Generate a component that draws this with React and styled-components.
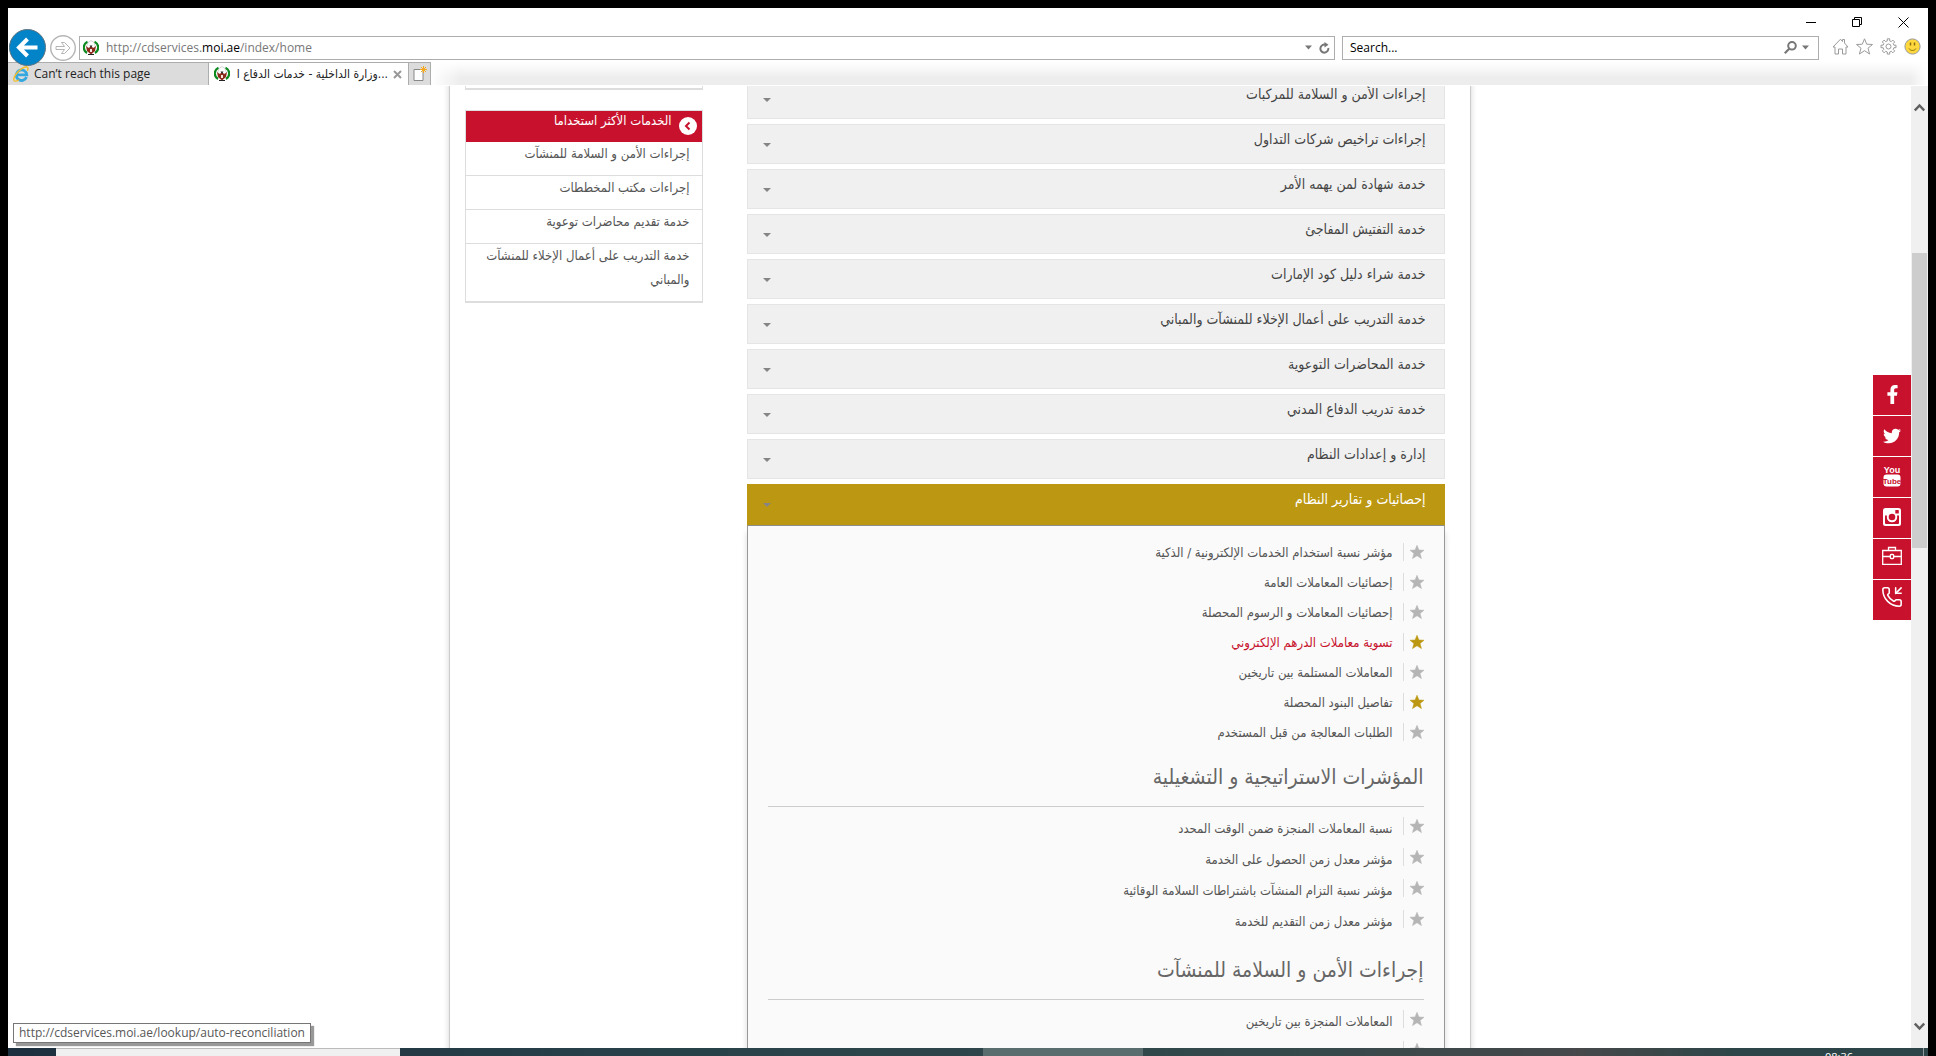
import React from "react";
import styled, { createGlobalStyle, css } from "styled-components";
import { FaFacebookF, FaTwitter } from "react-icons/fa";
import { PhoneIncoming } from "lucide-react";

const RED = "#c8122d";
const GOLD = "#bc9711";
const ARABIC = '"DejaVu Sans Condensed", "DejaVu Sans", sans-serif';
const UI = '"Open Sans", "Noto Sans", sans-serif';

const GlobalStyle = createGlobalStyle`
  *, *::before, *::after { box-sizing: border-box; }
  body { margin: 0; background: #000; }
  ul { list-style: none; margin: 0; padding: 0; }
  button { border: 0; padding: 0; background: none; font: inherit; color: inherit; cursor: pointer; }
  a { color: inherit; text-decoration: none; }
  svg { display: block; flex: none; }
`;

/* ---------- desktop and window ---------- */

const Desktop = styled.div`
  display: flex;
  flex-direction: column;
  height: 100vh;
  padding: 8px 8px 0;
  overflow: hidden;
  font-family: ${UI};
`;

const BrowserWindow = styled.div`
  flex: 1;
  min-height: 0;
  display: flex;
  flex-direction: column;
  background: #fff;
  position: relative;
`;

const TitleBar = styled.div`
  display: flex;
  justify-content: flex-end;
  gap: 35px;
  height: 21px;
  padding: 9px 19px 0 0;
`;

const WindowButton = styled.button`
  width: 11px;
  height: 11px;
`;

const AddressRow = styled.div`
  display: flex;
  align-items: center;
  height: 33px;
  padding: 4px 7px 0 1px;
`;

const NavButton = styled.button`
  width: ${(p) => p.$size}px;
  height: ${(p) => p.$size}px;
  margin-right: ${(p) => p.$gap}px;
  position: relative;
  z-index: 1;
`;

const field = css`
  display: flex;
  align-items: center;
  height: 24px;
  border: 1px solid #adadad;
  background: #fff;
  font-size: 12px;
`;

const UrlField = styled.div`
  ${field}
  flex: 1;
  gap: 7px;
  padding: 0 4px 0 3px;
  color: #777;
  margin-right: 7px;
`;

const UrlText = styled.div`
  flex: 1;
  font-size: 12px;
  line-height: 20px;
  b { font-weight: 400; color: #000; }
`;

const SearchField = styled.form`
  ${field}
  width: 477px;
  gap: 5px;
  padding: 0 9px 0 7px;
  margin-right: 13px;
`;

const SearchInput = styled.input`
  flex: 1;
  min-width: 0;
  border: 0;
  outline: 0;
  padding: 0;
  background: none;
  font: 12px/20px ${UI};
  &::placeholder { color: #000; opacity: 1; }
`;

const ToolIcons = styled.div`
  display: flex;
  gap: 7px;
  padding-bottom: 2px;
`;

const TabBar = styled.div`
  display: flex;
  height: 24px;
  background:
    linear-gradient(to right, #fff, rgba(255, 255, 255, 0) 30px) 423px 0 / 100% 100% no-repeat,
    linear-gradient(to left, #fff, rgba(255, 255, 255, 0) 18px),
    linear-gradient(#fff, #ededed 16px);
  border-bottom: 1px solid #fff;
`;

const Tab = styled.div`
  display: flex;
  align-items: center;
  gap: 5px;
  width: ${(p) => (p.$active ? "201px" : "200px")};
  padding: 0 6px 0 5px;
  border: 1px solid #adadad;
  border-left-width: ${(p) => (p.$active ? "1px" : "0")};
  border-right-width: ${(p) => (p.$active ? "1px" : "0")};
  border-bottom: 0;
  background: ${(p) => (p.$active ? "#fff" : "#dcdcdc")};
`;

const TabTitle = styled.button`
  flex: 1;
  display: flex;
  align-items: center;
  gap: 5px;
  text-align: left;
  white-space: nowrap;
  font-size: 12px;
  line-height: 20px;
  color: #222;
  bdi { font-family: ${ARABIC}; flex: 1; text-align: right; }
`;

const NewTab = styled.button`
  display: grid;
  place-items: center;
  width: 22px;
  border: 1px solid #adadad;
  border-left: 0;
  border-bottom: 0;
  background: #dcdcdc;
`;

/* ---------- page viewport ---------- */

const Viewport = styled.div`
  flex: 1;
  min-height: 0;
  display: flex;
  overflow: hidden;
`;

const PageArea = styled.div`
  flex: 1;
  overflow: hidden;
  position: relative;
`;

const Sheet = styled.div`
  direction: rtl;
  display: flex;
  align-items: flex-start;
  justify-content: space-between;
  gap: 44px;
  max-width: 1022px;
  min-height: 100%;
  margin: -7px auto 0;
  padding: 0 25px 0 15px;
  border: solid #ccc;
  border-width: 0 1px;
  box-shadow: 0 0 6px rgba(0, 0, 0, 0.18);
  font-family: ${ARABIC};
`;

const Main = styled.main`
  flex: 1;
`;

const Row = styled.button`
  display: flex;
  align-items: flex-start;
  justify-content: space-between;
  width: 100%;
  height: 40px;
  margin-bottom: 5px;
  padding: 2px 18px 0 15px;
  border: 1px solid #e5e5e5;
  background: #f0f0f0;
  font-size: 14px;
  line-height: 24px;
  color: #444;
  ${(p) =>
    p.$open &&
    css`
      height: 42px;
      margin: 6px 0 0;
      border-color: ${GOLD} ${GOLD} #8e8e8e;
      background: ${GOLD};
      color: #fff;
      margin-top: 1px;
    `}
`;

const Caret = styled.span`
  margin-top: 16px;
  border: solid transparent;
  border-width: 4px 4px 0;
  border-top-color: #858585;
`;

const Panel = styled.div`
  padding: 17px 20px 0;
  border: solid #999;
  border-width: 0 1px;
  background: #fafafa;
  box-shadow: 0 6px 6px rgba(0, 0, 0, 0.15);
`;

const LinkList = styled.ul`
  padding-bottom: ${(p) => (p.$loose ? 5 : 0)}px;
  li { height: ${(p) => (p.$loose ? 31 : 30)}px; }
  a { line-height: ${(p) => (p.$loose ? 24 : 20)}px; }
`;

const Item = styled.li`
  display: flex;
  align-items: flex-start;
  gap: 6px;
`;

const StarButton = styled.button`
  padding-top: 2px;
  color: ${(p) => (p.$on ? GOLD : "#b5b5b5")};
`;

const ItemLink = styled.a`
  height: 18px;
  padding-right: 10px;
  border-right: 1px solid #ddd;
  font-size: 13px;
  color: ${(p) => (p.$hot ? RED : "#555")};
`;

const SectionTitle = styled.h2`
  margin: 9px 0 10px;
  padding-bottom: 14px;
  border-bottom: 1px solid #ccc;
  font-weight: 400;
  font-size: 21px;
  line-height: 30px;
  color: #666;
`;

/* ---------- side column ---------- */

const Side = styled.aside`
  width: 238px;
  display: flex;
  flex-direction: column;
  gap: 20px;
`;

const SideBox = styled.section`
  min-height: 11px;
  border: 1px solid #ddd;
  border-bottom-width: 2px;
`;

const SideTitle = styled.h3`
  display: flex;
  align-items: flex-start;
  gap: 7px;
  height: 31px;
  margin: 0;
  padding: 0 5px 0 0;
  background: ${RED};
  color: #fff;
  font-weight: 400;
  font-size: 13px;
  line-height: 20px;
  svg { margin-top: 6px; }
`;

const SideLink = styled.a`
  display: block;
  padding: 0 12px 9px;
  font-size: 13px;
  line-height: 24px;
  color: #555;
  li + li > & { border-top: 1px solid #ddd; }
`;

/* ---------- floating and edge parts ---------- */

const Social = styled.nav`
  position: absolute;
  top: 289px;
  right: 0;
  display: flex;
  flex-direction: column;
  gap: 1px;
`;

const SocialLink = styled.a`
  display: grid;
  place-items: center;
  width: 38px;
  height: 40px;
  padding-bottom: ${(p) => p.$lift}px;
  background: ${RED};
  color: #fff;
`;

const Scrollbar = styled.div`
  display: flex;
  flex-direction: column;
  align-items: center;
  width: 17px;
  padding: 17px 0;
  background: #f0f0f0;
`;

const Track = styled.div`
  flex: 1;
  width: 15px;
  padding-top: 141px;
`;

const Thumb = styled.div`
  height: 295px;
  background: #cdcdcd;
`;

const StatusTip = styled.output`
  position: absolute;
  left: 5px;
  bottom: 5px;
  height: 20px;
  padding: 0 5px;
  border: 1px solid #767676;
  background: #fff;
  box-shadow: 3px 3px 1px rgba(0, 0, 0, 0.4);
  font-size: 12px;
  line-height: 18px;
  color: #575757;
`;

const Taskbar = styled.footer`
  display: grid;
  grid-template-columns: 48px 344px 583px 160px 1fr auto 70px 5px;
  height: 8px;
  overflow: hidden;
  background: linear-gradient(to right, #1d303f, #28424a 35%, #33494b 65%, #46484a 82%, #2d4548 90%);
`;

const TaskSearch = styled.div`
  grid-column: 2;
  background: #f0f0f0;
  border-top: 1px solid #bbb;
`;

const TaskApp = styled.div`
  grid-column: 4;
  background: #596c6e;
`;

const Clock = styled.time`
  grid-column: 6;
  padding-top: 2px;
  font-size: 11px;
  line-height: 14px;
  color: #fff;
`;

const ShowDesktop = styled.div`
  grid-column: 8;
  border-left: 1px solid #8b9798;
`;

/* ---------- drawings ---------- */

const Emblem = () => (
  <svg width="16" height="16" viewBox="0 0 16 16" aria-hidden="true">
    <path d="M4.500 1.800A6.300 6.300 0 0 0 4 13M11.500 1.800A6.300 6.300 0 0 1 12 13" fill="none" stroke="#0c8a1f" strokeWidth="2.200" />
    <path d="M5 2.500 8 .5l3 2 1.500 4.500L8 9 3.500 7z" fill="#fff" stroke="#aaa" strokeWidth=".5" />
    <path d="M3 6l2.500 2L8 6.500 10.500 8 13 6l-1 5-4 3.500L4 11z" fill="#8c2a1c" />
    <path d="M6.500 5.500h3L8 8z" fill="#222" />
    <path d="M7 9h2v3H7z" fill="#f3e5e0" />
    <path d="M5 14.500h6" stroke="#222" />
  </svg>
);

const IeLogo = () => (
  <svg width="16" height="16" viewBox="0 0 16 16" aria-hidden="true">
    <path d="M13.500 11A5.300 5.300 0 1 1 13.800 8.800H4" fill="none" stroke="#35a8e0" strokeWidth="2.800" />
    <path d="M1.300 14.800C-1 11.500 7 2 12.500.9c3-.5 2.800 2 1.800 4" fill="none" stroke="#f3bd2b" strokeWidth="1.500" />
    <path d="M1.300 14.800c1 .8 3 0 4.500-1" fill="none" stroke="#f3bd2b" strokeWidth="1.400" />
  </svg>
);

const BackIcon = () => (
  <svg width="37" height="37" viewBox="0 0 37 37" aria-hidden="true">
    <circle cx="18.500" cy="18.500" r="18" fill="#0484c8" stroke="#5f7480" />
    <path d="M28.500 18.500H11M18.500 10l-8.500 8.500 8.500 8.500" fill="none" stroke="#fff" strokeWidth="4" />
  </svg>
);

const ForwardIcon = () => (
  <svg width="26" height="26" viewBox="0 0 26 26" fill="none" stroke="#b5b5b5" aria-hidden="true">
    <circle cx="13" cy="13" r="12.300" strokeWidth="1.400" />
    <path d="M6 11.500h8.500L11.500 7.500h3L20 13l-5.500 5.500h-3l3-4H6z" />
  </svg>
);

const Down = () => (
  <svg width="7" height="5" viewBox="0 0 7 5" aria-hidden="true"><path d="M0 .5h7L3.500 4.500z" fill="#777" /></svg>
);

const Refresh = () => (
  <svg width="11" height="12" viewBox="0 0 11 12" aria-hidden="true">
    <path d="M6.500 2.800A4 4 0 1 0 9.300 6" fill="none" stroke="#777" strokeWidth="2" />
    <path d="M5.500 0v5.500l4-2.700z" fill="#777" />
  </svg>
);

const Magnifier = () => (
  <svg width="13" height="13" viewBox="0 0 13 13" fill="none" stroke="#777" aria-hidden="true">
    <circle cx="8" cy="4.800" r="3.800" strokeWidth="2" /><path d="M5.200 7.800.8 12.200" strokeWidth="2.200" />
  </svg>
);

const Home = () => (
  <svg width="17" height="17" viewBox="0 0 17 17" fill="none" stroke="#9a9a9a" aria-hidden="true">
    <path d="M3 9v7h3.500v-5h4v5H14V9h2L12.500 5V1.500h-2V3.500L8.500 1.200 1 9z" />
  </svg>
);

const starPath = "M8.500.8l2.200 5.400 5.800.3-4.500 3.700 1.600 5.800-5.100-3.300L3.400 16 5 10.200.5 6.500l5.800-.3z";

const OutlineStar = () => (
  <svg width="17" height="17" viewBox="0 0 17 17" fill="none" stroke="#9a9a9a" aria-hidden="true"><path d={starPath} /></svg>
);

const Star = () => (
  <svg width="14" height="14" viewBox="0.5 0.5 16 16" fill="currentColor" stroke="currentColor" strokeWidth=".6" overflow="visible" aria-hidden="true">
    <path d={starPath} />
  </svg>
);

const Gear = () => (
  <svg width="17" height="17" viewBox="0 0 17 17" fill="none" stroke="#9a9a9a" aria-hidden="true">
    <path d="M7.300.8h2.400v2.100l1.600.7 1.500-1.500 1.900 1.900-1.500 1.500.7 1.700H16v2.500h-2.100l-.7 1.700 1.500 1.500-1.900 1.900-1.500-1.500-1.600.7v2.100H7.300V14l-1.700-.7-1.500 1.500-1.800-1.900 1.500-1.500-.7-1.700H1V7.200h2.100l.7-1.700L2.300 4l1.800-1.900 1.500 1.500 1.700-.7z" />
    <circle cx="8.500" cy="8.500" r="2.500" />
  </svg>
);

const Smile = () => (
  <svg width="17" height="17" viewBox="0 0 17 17" aria-hidden="true">
    <circle cx="8.500" cy="8.500" r="7.600" fill="#ffd83d" stroke="#999" />
    <path d="M6.500 4.500v3M10.500 4.500v3" stroke="#8a6d10" strokeWidth="1.500" />
    <path d="M5 10.500c1.500 2.600 5.500 2.600 7 0" fill="none" stroke="#8a6d10" />
  </svg>
);

const NewTabIcon = () => (
  <svg width="14" height="16" viewBox="0 0 14 16" aria-hidden="true">
    <path d="M1 3.500h9v11H1z" fill="#fff" stroke="#888" />
    <path d="M10.500 0v7M7 3.500h7M8 1l5 5M13 1 8 6" stroke="#f5a81c" />
  </svg>
);

const CircleChevron = () => (
  <svg width="18" height="18" viewBox="0 0 18 18" aria-hidden="true">
    <circle cx="9" cy="9" r="9" fill="#fff" />
    <path d="M10.500 5.500 7 9l3.500 3.500" fill="none" stroke={RED} strokeWidth="2" />
  </svg>
);

const YouTube = () => (
  <svg width="18" height="22" viewBox="0 0 18 22" aria-hidden="true">
    <rect x=".5" y="9.500" width="17" height="12" rx="3" fill="#fff" />
    <g fontFamily="Liberation Sans Narrow, Liberation Sans, sans-serif" fontWeight="700" textAnchor="middle">
      <text x="9" y="8" fontSize="9" fill="#fff">You</text>
      <text x="9" y="19" fontSize="8" fill={RED}>Tube</text>
    </g>
  </svg>
);

const Instagram = () => (
  <svg width="18" height="18" viewBox="0 0 18 18" aria-hidden="true">
    <rect width="18" height="18" rx="2.500" fill="#fff" />
    <path d="M2 7.500h2.200a5 5 0 1 0 9.600 0H16V15a1 1 0 0 1-1 1H3a1 1 0 0 1-1-1z" fill={RED} />
    <circle cx="9" cy="9" r="5.200" fill="#fff" /><circle cx="9" cy="9" r="3.300" fill={RED} />
    <rect x="12.300" y="2" width="3.500" height="3.500" rx=".6" fill={RED} />
  </svg>
);

const Briefcase = () => (
  <svg width="20" height="20" viewBox="0 0 20 20" fill="none" stroke="#fff" strokeWidth="1.300" aria-hidden="true">
    <path d="M.7 4.500h18.600v13.800H.7zM6.500 4.300V1.500h7v2.800M.7 10.500H8M12 10.500h7.300" />
    <rect x="8.300" y="8.500" width="3.400" height="4" rx="1" />
  </svg>
);

const Chevron = ({ up }) => (
  <svg width="11" height="9" viewBox="0 0 11 9" fill="none" stroke="#606060" strokeWidth="2.500" aria-hidden="true">
    <path d={up ? "M.8 7.500 5.500 2.500l4.700 5" : "M.8 1.500l4.700 5 4.700-5"} />
  </svg>
);

/* ---------- data ---------- */

const services = [
  "إجراءات الأمن و السلامة للمركبات",
  "إجراءات تراخيص شركات التداول",
  "خدمة شهادة لمن يهمه الأمر",
  "خدمة التفتيش المفاجئ",
  "خدمة شراء دليل كود الإمارات",
  "خدمة التدريب على أعمال الإخلاء للمنشآت والمباني",
  "خدمة المحاضرات التوعوية",
  "خدمة تدريب الدفاع المدني",
  "إدارة و إعدادات النظام",
];

const reports = [
  { text: "مؤشر نسبة استخدام الخدمات الإلكترونية / الذكية" },
  { text: "إحصائيات المعاملات العامة" },
  { text: "إحصائيات المعاملات و الرسوم المحصلة" },
  { text: "تسوية معاملات الدرهم الإلكتروني", on: true, hot: true },
  { text: "المعاملات المستلمة بين تاريخين" },
  { text: "تفاصيل البنود المحصلة", on: true },
  { text: "الطلبات المعالجة من قبل المستخدم" },
];

const indicators = [
  { text: "نسبة المعاملات المنجزة ضمن الوقت المحدد" },
  { text: "مؤشر معدل زمن الحصول على الخدمة" },
  { text: "مؤشر نسبة التزام المنشآت باشتراطات السلامة الوقائية" },
  { text: "مؤشر معدل زمن التقديم للخدمة" },
];

const safety = [{ text: "المعاملات المنجزة بين تاريخين" }, { text: "" }];

const popular = [
  "إجراءات الأمن و السلامة للمنشآت",
  "إجراءات مكتب المخططات",
  "خدمة تقديم محاضرات توعوية",
  "خدمة التدريب على أعمال الإخلاء للمنشآت والمباني",
];

const social = [
  { name: "Facebook", icon: <FaFacebookF size={19} />, lift: 2 },
  { name: "Twitter", icon: <FaTwitter size={18} />, lift: 0 },
  { name: "YouTube", icon: <YouTube />, lift: 2 },
  { name: "Instagram", icon: <Instagram />, lift: 2 },
  { name: "Careers", icon: <Briefcase />, lift: 6 },
  { name: "Contact", icon: <PhoneIncoming size={22} strokeWidth={1.7} />, lift: 6 },
];

const Links = ({ items, loose }) => (
  <LinkList $loose={loose}>
    {items.map((item, i) => (
      <Item key={i}>
        <StarButton $on={item.on} aria-label="المفضلة"><Star /></StarButton>
        <ItemLink href="#" $hot={item.hot}>{item.text}</ItemLink>
      </Item>
    ))}
  </LinkList>
);

export default function App() {
  return (
    <Desktop>
      <GlobalStyle />
      <BrowserWindow>
        <TitleBar>
          <WindowButton aria-label="Minimize">
            <svg width="11" height="11" stroke="#000"><path d="M0 5.500h10" /></svg>
          </WindowButton>
          <WindowButton aria-label="Restore">
            <svg width="11" height="11" stroke="#000" fill="none"><path d="M.5 2.500h7v7h-7zM2.500 2.500v-2h7v7h-2" /></svg>
          </WindowButton>
          <WindowButton aria-label="Close">
            <svg width="11" height="11" stroke="#000"><path d="M.5.500l10 10M10.500.500l-10 10" /></svg>
          </WindowButton>
        </TitleBar>
        <AddressRow>
          <NavButton $size={37} $gap={4} aria-label="Back"><BackIcon /></NavButton>
          <NavButton $size={26} $gap={3} aria-label="Forward"><ForwardIcon /></NavButton>
          <UrlField>
            <Emblem />
            <UrlText role="textbox" aria-label="Address">http://cdservices.<b>moi.ae</b>/index/home</UrlText>
            <Down />
            <button aria-label="Refresh"><Refresh /></button>
          </UrlField>
          <SearchField role="search">
            <SearchInput aria-label="Search" placeholder="Search..." />
            <button type="button" aria-label="Go"><Magnifier /></button>
            <Down />
          </SearchField>
          <ToolIcons>
            <button aria-label="Home"><Home /></button>
            <button aria-label="Favorites"><OutlineStar /></button>
            <button aria-label="Tools"><Gear /></button>
            <button aria-label="Feedback"><Smile /></button>
          </ToolIcons>
        </AddressRow>
        <TabBar>
          <Tab><TabTitle><IeLogo /><span>Can’t reach this page</span></TabTitle></Tab>
          <Tab $active>
            <TabTitle><Emblem /><bdi dir="rtl">...وزارة الداخلية - خدمات الدفاع ا</bdi></TabTitle>
            <button aria-label="Close tab">
              <svg width="9" height="9" stroke="#999" strokeWidth="2"><path d="M1 1l7 7M8 1 1 8" /></svg>
            </button>
          </Tab>
          <NewTab aria-label="New tab"><NewTabIcon /></NewTab>
        </TabBar>

        <Viewport>
          <PageArea>
            <Sheet lang="ar">
              <Main>
                {services.map((name) => (
                  <Row key={name}><span>{name}</span><Caret /></Row>
                ))}
                <Row $open aria-expanded="true"><span>إحصائيات و تقارير النظام</span><Caret /></Row>
                <Panel>
                  <Links items={reports} />
                  <SectionTitle>المؤشرات الاستراتيجية و التشغيلية</SectionTitle>
                  <Links items={indicators} loose />
                  <SectionTitle>إجراءات الأمن و السلامة للمنشآت</SectionTitle>
                  <Links items={safety} loose />
                </Panel>
              </Main>
              <Side>
                <SideBox />
                <SideBox>
                  <SideTitle><CircleChevron />الخدمات الأكثر استخداما</SideTitle>
                  <ul>
                    {popular.map((name) => (
                      <li key={name}><SideLink href="#">{name}</SideLink></li>
                    ))}
                  </ul>
                </SideBox>
              </Side>
            </Sheet>
            <Social>
              {social.map(({ name, icon, lift }) => (
                <SocialLink key={name} href="#" $lift={lift} aria-label={name}>{icon}</SocialLink>
              ))}
            </Social>
          </PageArea>
          <Scrollbar>
            <Chevron up />
            <Track><Thumb /></Track>
            <Chevron />
          </Scrollbar>
        </Viewport>
        <StatusTip>http://cdservices.moi.ae/lookup/auto-reconciliation</StatusTip>
      </BrowserWindow>
      <Taskbar>
        <TaskSearch />
        <TaskApp />
        <Clock>08:36</Clock>
        <ShowDesktop />
      </Taskbar>
    </Desktop>
  );
}
